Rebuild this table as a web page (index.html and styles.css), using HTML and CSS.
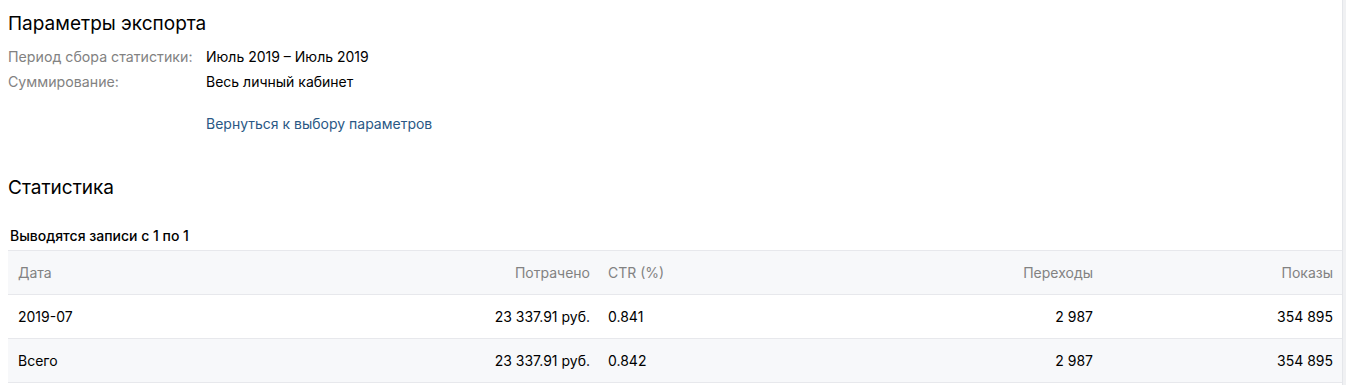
FILE: index.html
```html
<!DOCTYPE html>
<html lang="ru">
<head>
<meta charset="utf-8">
<link rel="stylesheet" href="styles.css">
</head>
<body>
<div class="page">
  <main class="content">
    <section class="export">
      <h2 class="title">Параметры экспорта</h2>
      <div class="params">
        <div class="param-label">Период сбора статистики:</div>
        <div class="param-value">Июль 2019 – Июль 2019</div>
        <div class="param-label">Суммирование:</div>
        <div class="param-value">Весь личный кабинет</div>
        <div></div>
        <a class="back-link" href="#">Вернуться к выбору параметров</a>
      </div>
    </section>
    <section class="stats">
      <h2 class="title">Статистика</h2>
      <div class="count">Выводятся записи с 1 по 1</div>
      <div class="table">
        <div class="row head">
          <div class="cell">Дата</div>
          <div class="cell right">Потрачено</div>
          <div class="cell">CTR (%)</div>
          <div class="cell right">Переходы</div>
          <div class="cell right">Показы</div>
        </div>
        <div class="row">
          <div class="cell">2019-07</div>
          <div class="cell right">23 337.91 руб.</div>
          <div class="cell">0.841</div>
          <div class="cell right">2 987</div>
          <div class="cell right">354 895</div>
        </div>
        <div class="row total">
          <div class="cell">Всего</div>
          <div class="cell right">23 337.91 руб.</div>
          <div class="cell">0.842</div>
          <div class="cell right">2 987</div>
          <div class="cell right">354 895</div>
        </div>
      </div>
    </section>
  </main>
  <div class="side"></div>
</div>
</body>
</html>
```
FILE: styles.css
```css
* { box-sizing: border-box; }
html, body { margin: 0; padding: 0; background: #fff; }
body {
  font-family: Inter, Roboto, "Liberation Sans", Arial, sans-serif;
  color: #000;
  font-size: 14px;
}
.page {
  display: flex;
  height: 385px;
  overflow: hidden;
}
.content {
  flex: 1;
  padding: 14px 0 0 8px;
}
.side {
  width: 4px;
  background: #f0f1f3;
  border-left: 1px solid #e4e6ea;
}
.title {
  margin: 0;
  font-size: 19px;
  font-weight: 400;
  line-height: 20px;
  color: #000;
}
.params {
  display: grid;
  grid-template-columns: 198px auto;
  margin-top: 10px;
}
.param-label {
  color: #828282;
  font-size: 14.2px;
  line-height: 25px;
}
.param-value {
  line-height: 25px;
  color: #000;
}
.back-link {
  margin-top: 20px;
  color: #2a5885;
  text-decoration: none;
  line-height: 20px;
}
.stats { margin-top: 44px; }
.count {
  margin-top: 30px;
  margin-left: 2px;
  font-size: 14px;
  font-weight: 500;
  line-height: 16px;
}
.table {
  margin-top: 6px;
  border-top: 1px solid #e7e8ec;
}
.row {
  display: grid;
  grid-template-columns: 290px 300px 250px 255px 1fr;
  height: 44px;
  align-items: center;
  border-bottom: 1px solid #e7e8ec;
}
.row.head { background: #f7f8fa; color: #828282; }
.row.total { background: #f7f8fa; }
.cell { padding: 0 10px; white-space: nowrap; }
.cell.right { text-align: right; }
.row .cell:nth-child(2) { padding-right: 8px; }
.row .cell:nth-child(3) { padding-left: 10px; }
.row .cell:nth-child(5) { padding-right: 9px; }
```
